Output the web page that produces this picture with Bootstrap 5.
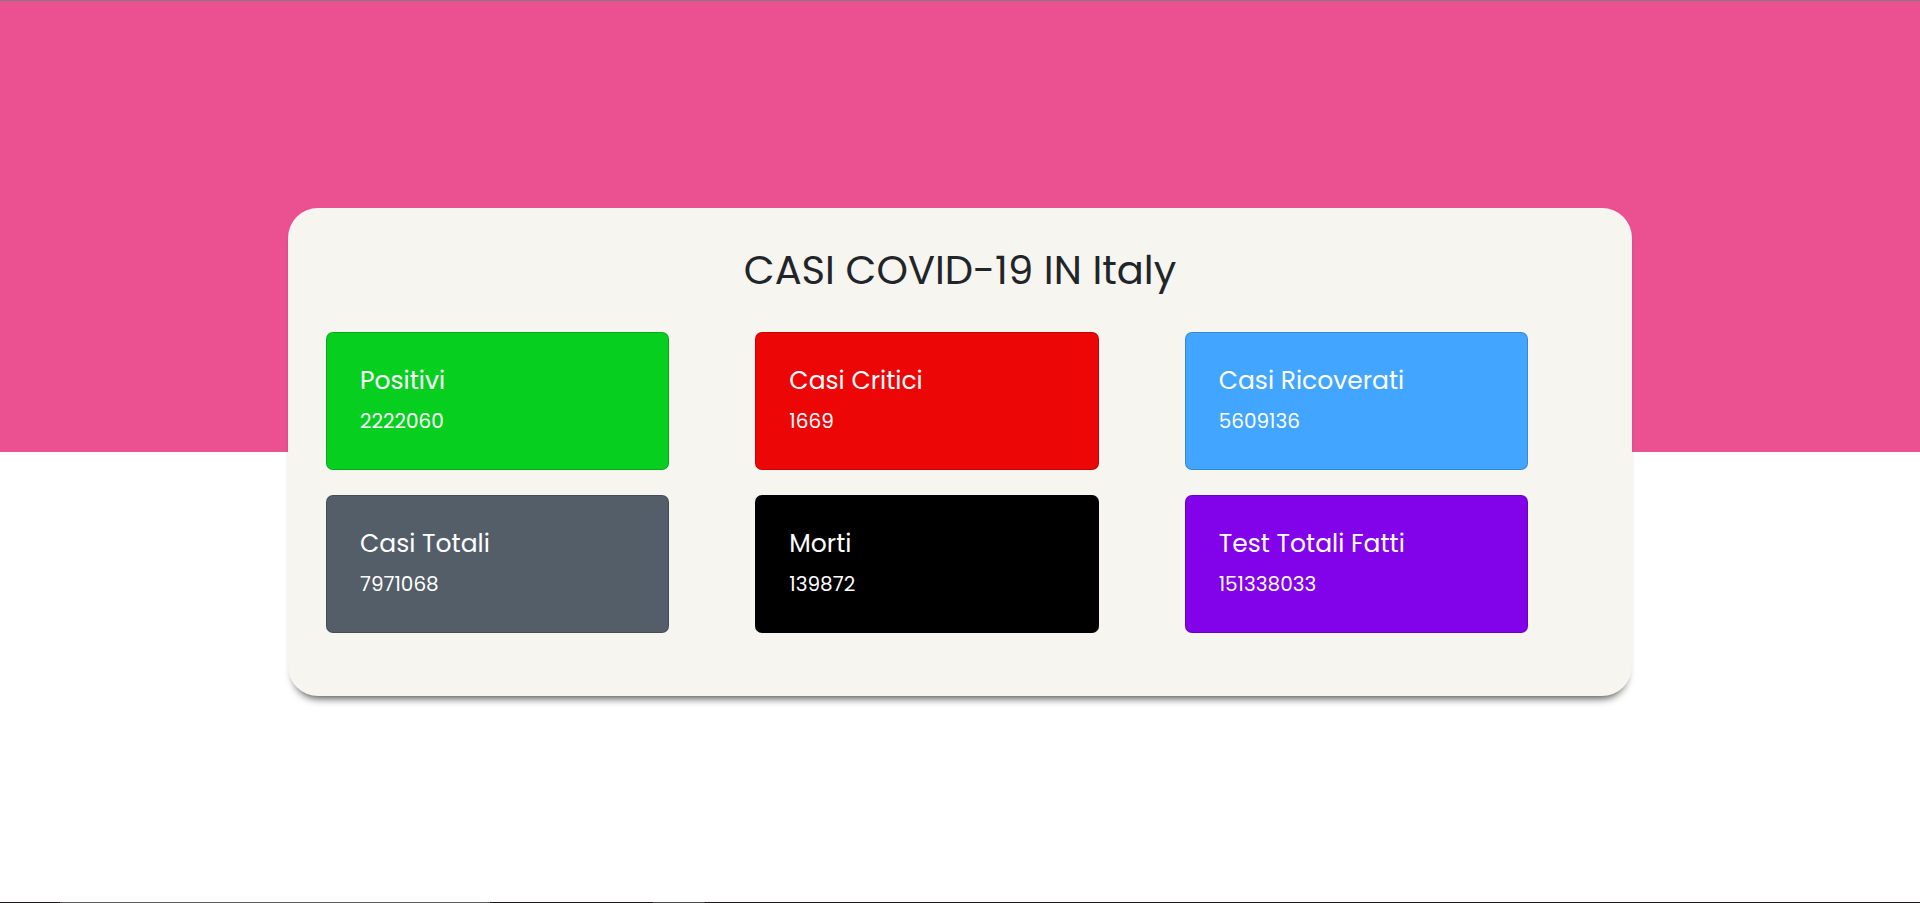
<!DOCTYPE html>
<html lang="it">
<head>
<meta charset="utf-8">
<meta name="viewport" content="width=device-width, initial-scale=1">
<title>Casi COVID-19 in Italy</title>
<link href="https://cdn.jsdelivr.net/npm/bootstrap@5.3.0/dist/css/bootstrap.min.css" rel="stylesheet">
<style>
  body { font-family: Poppins, Inter, sans-serif; }
  .page {
    border-top: 1px solid #7d7d7d;
    background: linear-gradient(#eb5190 calc(50% + 1px), #fff calc(50% + 1px));
  }
  .edge-strip {
    height: 1px;
    background: linear-gradient(90deg, #1b171b 60px, #5e5c5e 60px 490px, #1b171b 490px 653px, #4a484a 653px 705px, #1b171b 705px);
  }
  .panel {
    width: 70%;
    padding: 38px 18px 63px 38px;
    background: #f6f5f0;
    border-radius: 30px;
    box-shadow: 0 8px 8px -6px rgba(0, 0, 0, .75);
  }
  .panel-title { font-size: 40px; line-height: 48px; font-weight: 400; margin: 0 20px 38px 0; }
  .stats { row-gap: 25px; }
  .stat { width: 80%; padding: 32px 33px; color: #fff; border-radius: 7px; }
  .stat h2 { font-size: 25px; line-height: 32px; font-weight: 400; margin-bottom: 8px; }
  .stat p { font-size: 20px; line-height: 32px; margin: 0; }
  .stat-positive { background: #07cf20; }
  .stat-critical { background: #ed0606; }
  .stat-recovered { background: #42a5ff; }
  .stat-total { background: #535e69; }
  .stat-deaths { background: #000; }
  .stat-tests { background: #8202ea; }
</style>
</head>
<body class="d-flex flex-column min-vh-100">
  <main class="page flex-grow-1 d-flex align-items-center justify-content-center">
    <section class="panel">
      <h1 class="panel-title text-center">CASI COVID-19 IN Italy</h1>
      <div class="row g-0 stats">
        <div class="col-4"><div class="card stat stat-positive"><h2>Positivi</h2><p>2222060</p></div></div>
        <div class="col-4"><div class="card stat stat-critical"><h2>Casi Critici</h2><p>1669</p></div></div>
        <div class="col-4"><div class="card stat stat-recovered"><h2>Casi Ricoverati</h2><p>5609136</p></div></div>
        <div class="col-4"><div class="card stat stat-total"><h2>Casi Totali</h2><p>7971068</p></div></div>
        <div class="col-4"><div class="card stat stat-deaths"><h2>Morti</h2><p>139872</p></div></div>
        <div class="col-4"><div class="card stat stat-tests"><h2>Test Totali Fatti</h2><p>151338033</p></div></div>
      </div>
    </section>
  </main>
  <div class="edge-strip"></div>
  <script src="https://cdn.jsdelivr.net/npm/bootstrap@5.3.0/dist/js/bootstrap.bundle.min.js"></script>
</body>
</html>
